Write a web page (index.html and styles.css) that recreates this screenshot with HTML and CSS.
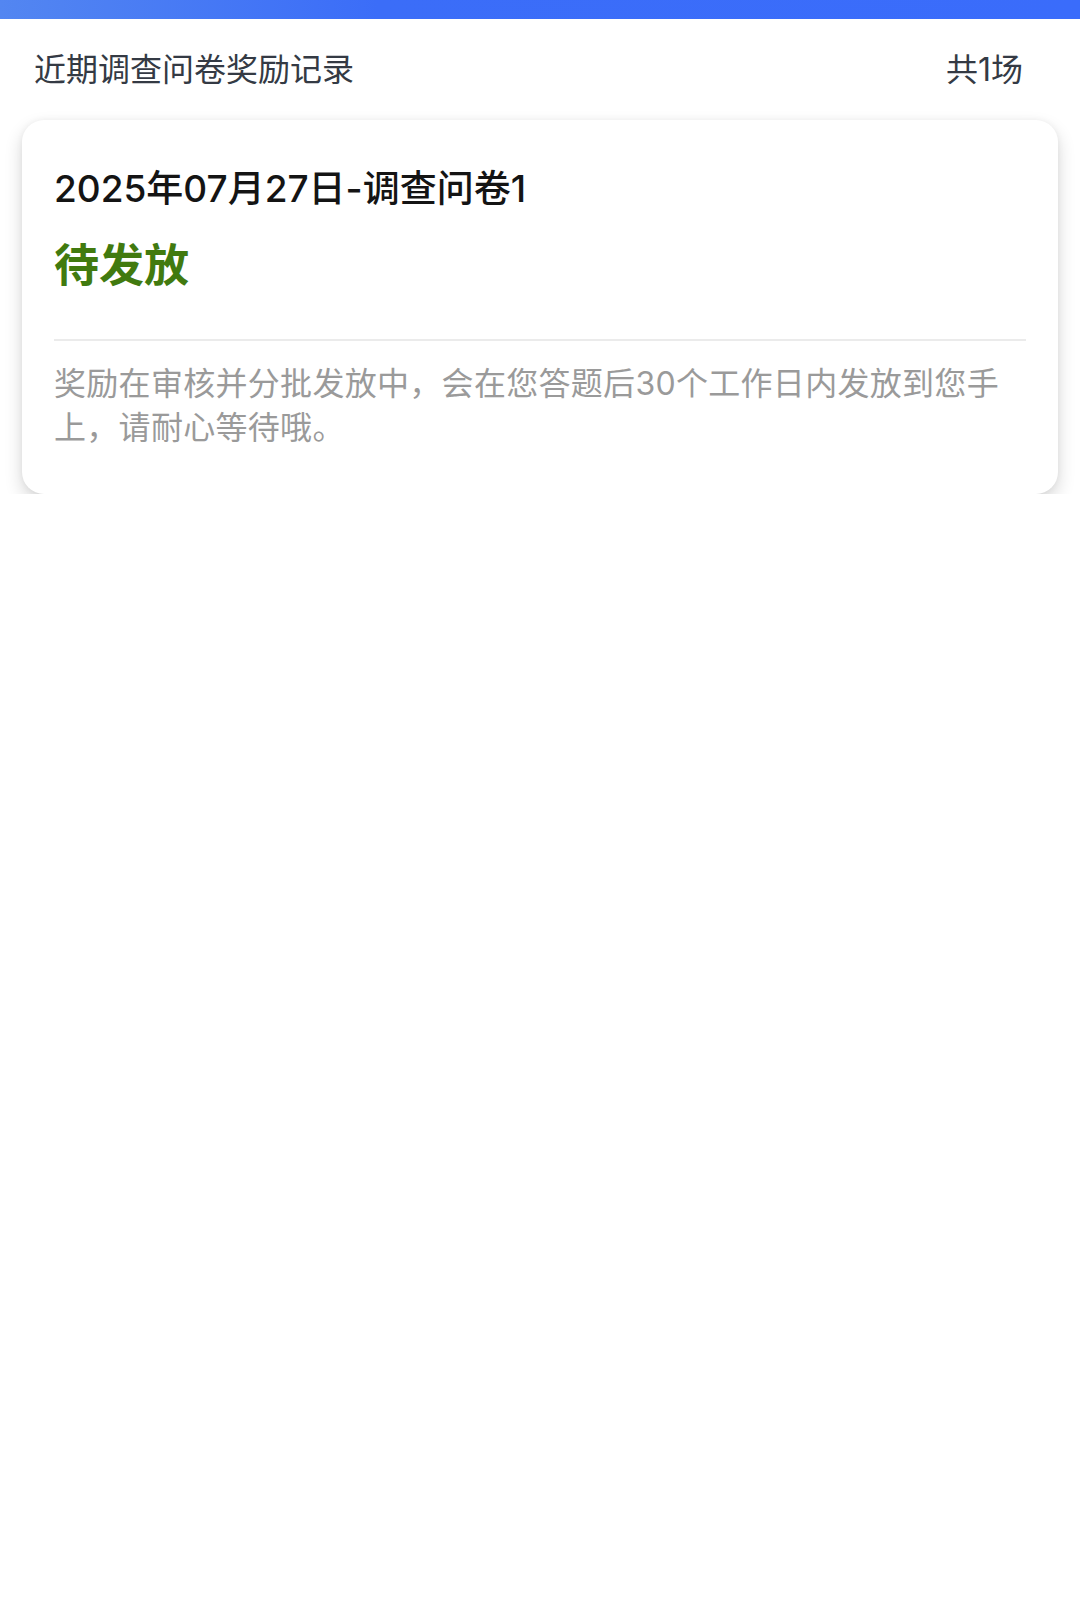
FILE: index.html
```html
<!DOCTYPE html>
<html lang="zh-CN">
<head>
  <meta charset="UTF-8">
  <meta name="viewport" content="width=device-width, initial-scale=1.0">
  <link rel="stylesheet" href="styles.css">
  <title>调查问卷奖励记录</title>
</head>
<body>
<div class="topBar"></div>

<div class="header">
  <span class="headerTitle">近期调查问卷奖励记录</span>
  <span class="headerCount">共1场</span>
</div>

<div class="recordList">
  <div class="recordCard">
    <div class="recordName">2025年07月27日-调查问卷1</div>
    <div class="recordStatus">待发放</div>
    <div class="divider"></div>
    <div class="recordTip">奖励在审核并分批发放中，会在您答题后30个工作日内发放到您手上，请耐心等待哦。</div>
  </div>
</div>
</body>
</html>
```

FILE: styles.css
```css
body {
  margin: 0;
  background: #fff;
  font-family: Inter, "Noto Sans CJK SC", sans-serif;
}

.topBar {
  height: 19px;
  background: linear-gradient(90deg, #5386f1, #3b6df8 35%, #3a6cfb);
}

.header {
  display: flex;
  justify-content: space-between;
  align-items: center;
  padding: 29px 57px 28px 34px;
  font-size: 32px;
  line-height: 44px;
  color: #343a44;
}

.recordList {
  padding: 0 22px;
}

.recordCard {
  background: #fff;
  border-radius: 22px;
  box-shadow: 0 8px 18px rgba(0, 0, 0, 0.16), 0 0 6px rgba(0, 0, 0, 0.05);
  padding: 45px 32px 44px;
}

.recordName {
  font-size: 37px;
  line-height: 48px;
  font-weight: 500;
  color: #141414;
}

.recordStatus {
  margin-top: 25px;
  font-size: 45px;
  line-height: 56px;
  font-weight: bold;
  color: #417a0f;
}

.divider {
  margin-top: 45px;
  height: 2px;
  background: #ebebeb;
}

.recordTip {
  margin-top: 21px;
  font-size: 32px;
  line-height: 44px;
  letter-spacing: 0.3px;
  color: #9a9a9a;
}
```
